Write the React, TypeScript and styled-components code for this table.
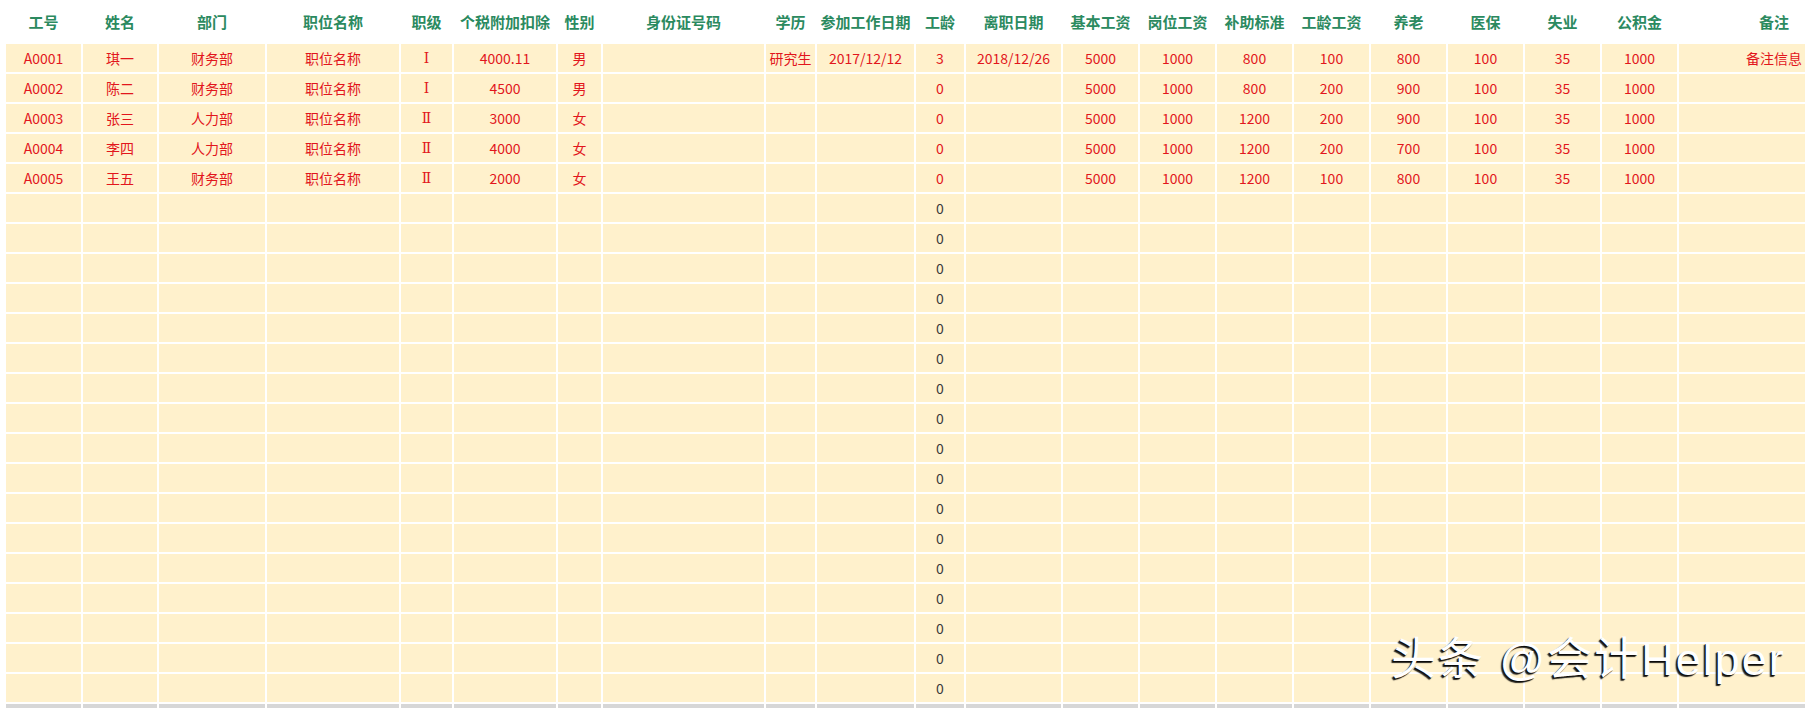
import React from "react";
import styled, { createGlobalStyle } from "styled-components";

const GlobalStyle = createGlobalStyle`
  html, body {
    margin: 0;
    padding: 0;
    background: #ffffff;
    overflow: hidden;
  }
  body {
    width: 1805px;
    height: 708px;
    font-family: "Microsoft YaHei", "Noto Sans CJK SC", "Noto Sans", sans-serif;
  }
`;

const Page = styled.div`
  position: relative;
  width: 1805px;
  height: 708px;
  overflow: hidden;
  padding-left: 6px;
  box-sizing: border-box;
`;

const Sheet = styled.div`
  display: grid;
  grid-template-columns: 75px 74px 106px 132px 51px 102px 43px 161px 49px 97px 48px 95px repeat(8, 75px) 190px;
  grid-auto-rows: 28px;
  grid-template-rows: 42px;
  gap: 2px;
  background: #ffffff;
  width: max-content;
`;

const HeadCell = styled.div`
  display: flex;
  align-items: center;
  justify-content: center;
  background: #ffffff;
  color: #2b8a5f;
  font-weight: 700;
  font-size: 15px;
  white-space: nowrap;
  padding-top: 1px;
`;

const Cell = styled.div<{ $tone?: "red" | "dark"; $foot?: boolean; $serif?: boolean }>`
  display: flex;
  align-items: center;
  justify-content: center;
  background: ${(p) => (p.$foot ? "#d7d7d7" : "#fff1cc")};
  color: ${(p) => (p.$tone === "dark" ? "#3c3c3c" : "#e2161c")};
  font-family: ${(p) =>
    p.$serif
      ? `"DejaVu Serif", "Liberation Serif", serif`
      : `"Microsoft YaHei", "Noto Sans CJK SC", "Noto Sans", sans-serif`};
  font-size: 14px;
  white-space: nowrap;
  overflow: hidden;
`;

const Watermark = styled.div`
  position: absolute;
  left: 1391px;
  top: 636px;
  font-family: "Liberation Sans", "Noto Sans CJK SC", sans-serif;
  font-size: 45px;
  line-height: 48px;
  letter-spacing: 2px;
  color: #ffffff;
  white-space: nowrap;
  text-shadow: -2px 2px 1px rgba(0, 0, 0, 0.85), -1px 1px 0 rgba(0, 0, 0, 0.7);
`;

const headers = [
  "工号", "姓名", "部门", "职位名称", "职级", "个税附加扣除", "性别", "身份证号码",
  "学历", "参加工作日期", "工龄", "离职日期", "基本工资", "岗位工资", "补助标准",
  "工龄工资", "养老", "医保", "失业", "公积金", "备注",
];

const data: string[][] = [
  ["A0001", "琪一", "财务部", "职位名称", "Ⅰ", "4000.11", "男", "", "研究生", "2017/12/12", "3", "2018/12/26", "5000", "1000", "800", "100", "800", "100", "35", "1000", "备注信息"],
  ["A0002", "陈二", "财务部", "职位名称", "Ⅰ", "4500", "男", "", "", "", "0", "", "5000", "1000", "800", "200", "900", "100", "35", "1000", ""],
  ["A0003", "张三", "人力部", "职位名称", "Ⅱ", "3000", "女", "", "", "", "0", "", "5000", "1000", "1200", "200", "900", "100", "35", "1000", ""],
  ["A0004", "李四", "人力部", "职位名称", "Ⅱ", "4000", "女", "", "", "", "0", "", "5000", "1000", "1200", "200", "700", "100", "35", "1000", ""],
  ["A0005", "王五", "财务部", "职位名称", "Ⅱ", "2000", "女", "", "", "", "0", "", "5000", "1000", "1200", "100", "800", "100", "35", "1000", ""],
];

const EMPTY_ROWS = 17;

export default function App() {
  const emptyRows = Array.from({ length: EMPTY_ROWS }, () =>
    headers.map((_, i) => (i === 10 ? "0" : ""))
  );
  return (
    <>
      <GlobalStyle />
      <Page>
        <Sheet>
          {headers.map((h, i) => (
            <HeadCell key={`h${i}`}>{h}</HeadCell>
          ))}
          {data.map((row, r) =>
            row.map((v, c) => (
              <Cell key={`d${r}-${c}`} $serif={c === 4}>
                {v}
              </Cell>
            ))
          )}
          {emptyRows.map((row, r) =>
            row.map((v, c) => (
              <Cell key={`e${r}-${c}`} $tone="dark">
                {v}
              </Cell>
            ))
          )}
          {headers.map((_, c) => (
            <Cell key={`f${c}`} $foot />
          ))}
        </Sheet>
        <Watermark>头条 @会计Helper</Watermark>
      </Page>
    </>
  );
}
